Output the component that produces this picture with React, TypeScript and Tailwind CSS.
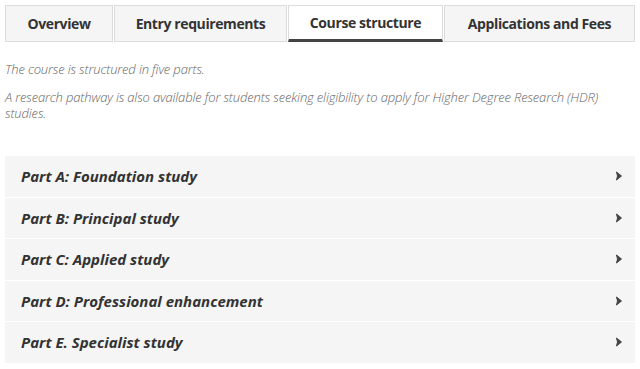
import React from "react";

const tabs = [
  { label: "Overview", w: "w-[108px]" },
  { label: "Entry requirements", w: "w-[173px]" },
  { label: "Course structure", w: "w-[155px]", active: true },
  { label: "Applications and Fees", w: "flex-1" },
];

const parts = [
  "Part A: Foundation study",
  "Part B: Principal study",
  "Part C: Applied study",
  "Part D: Professional enhancement",
  "Part E. Specialist study",
];

function Chevron() {
  return (
    <svg width="8" height="10" viewBox="0 0 8 10" className="text-[#444]">
      <path d="M1.5 1 L6.5 5 L1.5 9 L2.5 5 Z" fill="currentColor" stroke="currentColor" strokeWidth="1" strokeLinejoin="round" />
    </svg>
  );
}

export default function App() {
  return (
    <div className="w-[640px] h-[369px] bg-white px-[5px] pt-[5px] overflow-hidden" style={{ fontFamily: '"Open Sans", "Noto Sans", sans-serif' }}>
      <div className="flex h-[37px]">
        {tabs.map((t) => (
          <div
            key={t.label}
            className={`${t.w} flex items-center justify-center border border-[#dcdcdc] text-[14px] font-bold text-[#333] tracking-[-0.4px] ${
              t.active ? "bg-white border-b-[3px] border-b-[#444]" : "bg-[#f5f5f5]"
            } mr-[1px] last:mr-0`}
          >
            {t.label}
          </div>
        ))}
      </div>
      <div className="mt-[19px] text-[13px] italic font-light text-[#666] leading-[16px] tracking-[-0.15px] pr-[10px]">
        <p>The course is structured in five parts.</p>
        <p className="mt-[12px]">
          A research pathway is also available for students seeking eligibility to apply for Higher Degree Research (HDR) studies.
        </p>
      </div>
      <div className="mt-[35px] flex flex-col gap-[1px]">
        {parts.map((p) => (
          <div key={p} className="h-[40.5px] bg-[#f5f5f5] flex items-center justify-between pl-[16px] pr-[12px]">
            <span className="text-[15px] font-bold italic text-[#333]">{p}</span>
            <Chevron />
          </div>
        ))}
      </div>
    </div>
  );
}
